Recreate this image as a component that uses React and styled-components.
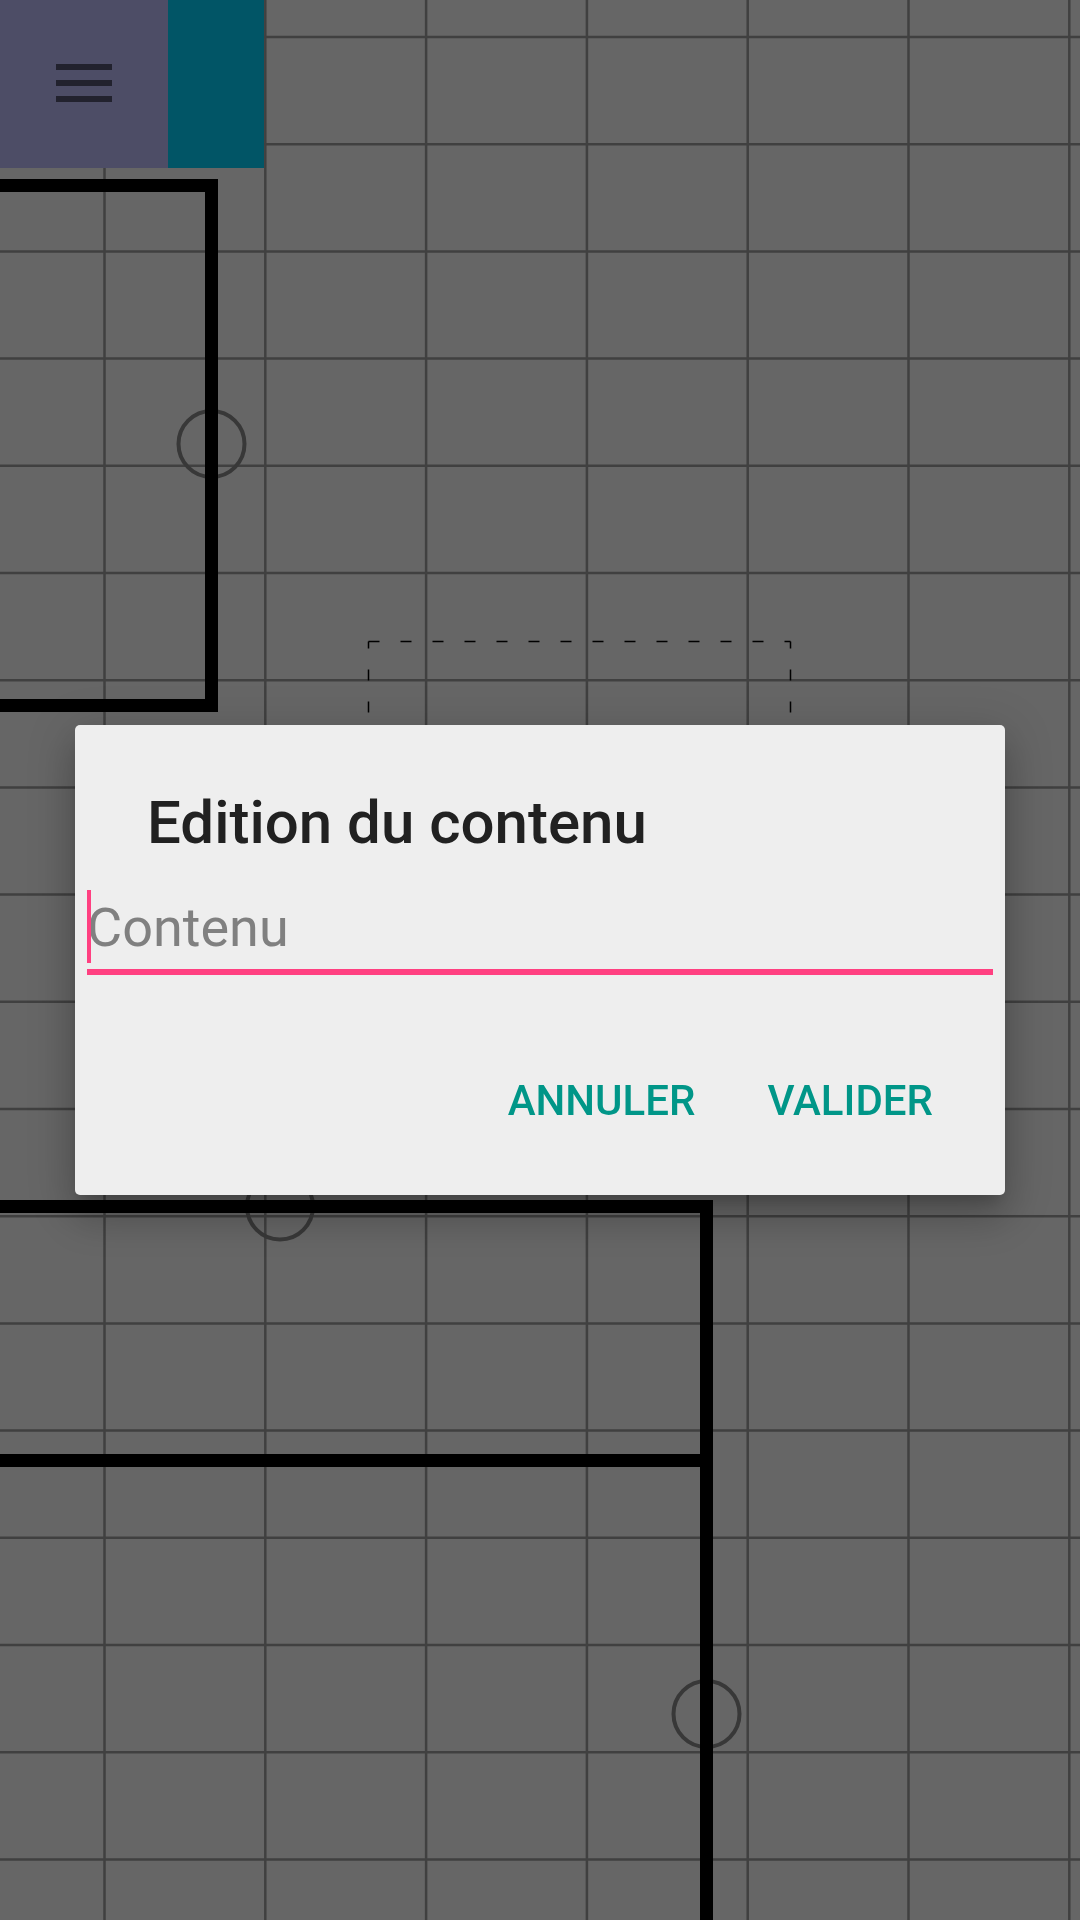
import React from 'react';
import styled, { createGlobalStyle } from 'styled-components';

const GlobalStyle = createGlobalStyle`
  html, body {
    margin: 0;
    padding: 0;
    background: #666666;
    overflow: hidden;
  }
  body {
    font-family: Roboto, "Noto Sans", sans-serif;
  }
`;

const Screen = styled.div`
  position: relative;
  width: 1080px;
  height: 1920px;
  background: #666666;
  overflow: hidden;
`;

const Board = styled.svg`
  display: block;
  width: 1080px;
  height: 1920px;
`;

const Toolbar = styled.div`
  position: absolute;
  top: 0;
  left: 0;
  display: flex;
`;

const MenuButton = styled.div`
  width: 168px;
  height: 168px;
  background: #4d4d66;
  display: flex;
  align-items: center;
  justify-content: center;
`;

const ColorSwatch = styled.div`
  width: 96px;
  height: 168px;
  background: ${(p) => p.color};
`;

const Overlay = styled.div`
  position: fixed;
  inset: 0;
  display: flex;
  align-items: center;
  justify-content: center;
`;

const Dialog = styled.div`
  width: 930px;
  box-sizing: border-box;
  background: #eeeeee;
  border-radius: 5px;
  padding-top: 58px;
  box-shadow: 0 24px 38px 3px rgba(0, 0, 0, 0.14),
    0 9px 46px 8px rgba(0, 0, 0, 0.12), 0 11px 15px -7px rgba(0, 0, 0, 0.2);
`;

const Title = styled.h2`
  margin: 0;
  padding: 0 72px;
  font-family: Roboto, sans-serif;
  font-weight: 500;
  font-size: 60px;
  line-height: 80px;
  color: #212121;
`;

const Field = styled.div`
  position: relative;
  margin: 29.5px 12px 0;
  padding-bottom: 4.5px;
  border-bottom: 6px solid #ff4081;
  font-family: Roboto, sans-serif;
  font-size: 54px;
  line-height: 72px;
  color: #808080;
`;

const Caret = styled.span`
  position: absolute;
  left: 0;
  top: -2.5px;
  width: 4px;
  height: 73px;
  background: #ff4081;
`;

const ButtonBar = styled.div`
  display: flex;
  justify-content: flex-end;
  gap: 24px;
  margin-top: 72.6px;
  padding: 0 48px 40px 0;
`;

const TextButton = styled.button`
  border: 0;
  background: none;
  padding: 0 24px;
  height: 108px;
  font-family: Roboto, sans-serif;
  font-weight: 500;
  font-size: 42px;
  line-height: 108px;
  color: #009688;
  text-transform: uppercase;
`;

const GRID = '#404040';
const cols = Array.from({ length: 7 }, (_, i) => 104.5 + i * 160.8);
const rows = Array.from({ length: 18 }, (_, i) => 37 + i * 107.2);
const nodes = [
  [211.5, 444],
  [280, 1206.5],
  [706.5, 1714],
];

function Diagram() {
  return (
    <Board viewBox="0 0 1080 1920">
      {cols.map((x) => (
        <line key={'c' + x} x1={x} y1={0} x2={x} y2={1920} stroke={GRID} strokeWidth={2.5} />
      ))}
      {rows.map((y) => (
        <line key={'r' + y} x1={0} y1={y} x2={1080} y2={y} stroke={GRID} strokeWidth={2.5} />
      ))}

      {/* selection box */}
      <g stroke="#000" strokeWidth={1.5} strokeDasharray="11 21" fill="none">
        <line x1={368.5} y1={641.5} x2={790.5} y2={641.5} />
        <line x1={368.5} y1={641.5} x2={368.5} y2={800} strokeDashoffset={4} />
        <line x1={790.5} y1={641.5} x2={790.5} y2={800} strokeDashoffset={4} />
      </g>

      {nodes.map(([cx, cy]) => (
        <circle key={cx} cx={cx} cy={cy} r={33} fill="none" stroke="#383838" strokeWidth={4} />
      ))}

      <g stroke="#000" strokeWidth={13} fill="none" strokeLinejoin="miter">
        <path d="M -20 185.5 H 211.5 V 705.5 H -20" />
        <path d="M -20 1206.5 H 706.5 V 1940" />
        <path d="M -20 1460.5 H 706.5" />
      </g>
    </Board>
  );
}

function MenuIcon() {
  return (
    <svg width="56" height="40" viewBox="0 0 56 40">
      <rect x="0" y="0" width="56" height="6" fill="#22222e" />
      <rect x="0" y="16" width="56" height="6" fill="#22222e" />
      <rect x="0" y="32" width="56" height="6" fill="#22222e" />
    </svg>
  );
}

export default function App() {
  return (
    <Screen>
      <GlobalStyle />
      <Diagram />
      <Toolbar>
        <MenuButton>
          <MenuIcon />
        </MenuButton>
        <ColorSwatch color="#015566" />
      </Toolbar>
      <Overlay>
        <Dialog>
          <Title>Edition du contenu</Title>
          <Field>
            <Caret />
            Contenu
          </Field>
          <ButtonBar>
            <TextButton>Annuler</TextButton>
            <TextButton>Valider</TextButton>
          </ButtonBar>
        </Dialog>
      </Overlay>
    </Screen>
  );
}
